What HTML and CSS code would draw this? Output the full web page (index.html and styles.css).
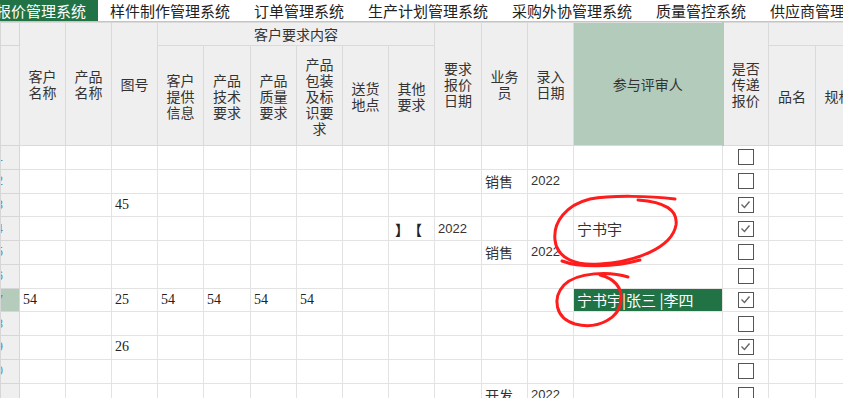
FILE: index.html
```html
<!DOCTYPE html>
<html lang="zh-CN">
<head>
  <meta charset="UTF-8">
  <title>报价管理系统</title>
  <link rel="stylesheet" href="styles.css">
</head>
<body>
  <div class="tabs">
    <div class="tab active">报价管理系统</div>
    <div class="tab">样件制作管理系统</div>
    <div class="tab">订单管理系统</div>
    <div class="tab">生产计划管理系统</div>
    <div class="tab">采购外协管理系统</div>
    <div class="tab">质量管控系统</div>
    <div class="tab">供应商管理系统</div>
  </div>

  <table class="grid">
    <colgroup>
      <col class="w-rn">
      <col class="w46"><col class="w46"><col class="w46">
      <col class="w46"><col class="w47"><col class="w46"><col class="w46"><col class="w46"><col class="w46">
      <col class="w47"><col class="w46"><col class="w46">
      <col class="w-rev">
      <col class="w46"><col class="w47"><col class="w46">
    </colgroup>
    <thead>
      <tr class="h1">
        <th class="rn"></th>
        <th rowspan="2">客户名称</th>
        <th rowspan="2">产品名称</th>
        <th rowspan="2">图号</th>
        <th colspan="6">客户要求内容</th>
        <th rowspan="2">要求报价日期</th>
        <th rowspan="2">业务员</th>
        <th rowspan="2">录入日期</th>
        <th rowspan="2" class="sel">参与评审人</th>
        <th rowspan="2" class="after-sel">是否传递报价</th>
        <th colspan="2"></th>
      </tr>
      <tr class="h2">
        <th class="rn"></th>
        <th>客户提供信息</th>
        <th>产品技术要求</th>
        <th>产品质量要求</th>
        <th>产品包装及标识要求</th>
        <th>送货地点</th>
        <th>其他要求</th>
        <th>品名</th>
        <th>规格</th>
      </tr>
    </thead>
    <tbody>
      <tr>
        <td class="rn"><span>1</span></td>
        <td></td><td></td><td></td><td></td><td></td><td></td><td></td><td></td><td></td>
        <td></td><td></td><td></td><td></td>
        <td><span class="cb"></span></td><td></td><td></td>
      </tr>
      <tr>
        <td class="rn"><span>2</span></td>
        <td></td><td></td><td></td><td></td><td></td><td></td><td></td><td></td><td></td>
        <td></td><td>销售</td><td class="date">2022</td><td></td>
        <td><span class="cb"></span></td><td></td><td></td>
      </tr>
      <tr>
        <td class="rn"><span>3</span></td>
        <td></td><td></td><td class="num">45</td><td></td><td></td><td></td><td></td><td></td><td></td>
        <td></td><td></td><td></td><td></td>
        <td><span class="cb on"><svg width="13" height="13" viewBox="0 0 13 13"><path d="M2.5 6.5 L5.5 9.5 L10.5 3.5" /></svg></span></td><td></td><td></td>
      </tr>
      <tr>
        <td class="rn"><span>4</span></td>
        <td></td><td></td><td></td><td></td><td></td><td></td><td></td><td></td><td class="br">】【</td>
        <td class="date">2022</td><td></td><td></td><td class="rev">宁书宇</td>
        <td><span class="cb on"><svg width="13" height="13" viewBox="0 0 13 13"><path d="M2.5 6.5 L5.5 9.5 L10.5 3.5" /></svg></span></td><td></td><td></td>
      </tr>
      <tr>
        <td class="rn"><span>5</span></td>
        <td></td><td></td><td></td><td></td><td></td><td></td><td></td><td></td><td></td>
        <td></td><td>销售</td><td class="date">2022</td><td></td>
        <td><span class="cb"></span></td><td></td><td></td>
      </tr>
      <tr>
        <td class="rn"><span>6</span></td>
        <td></td><td></td><td></td><td></td><td></td><td></td><td></td><td></td><td></td>
        <td></td><td></td><td></td><td></td>
        <td><span class="cb"></span></td><td></td><td></td>
      </tr>
      <tr>
        <td class="rn cur"><span>7</span></td>
        <td class="num">54</td><td></td><td class="num">25</td><td class="num">54</td><td class="num">54</td><td class="num">54</td><td class="num">54</td><td></td><td></td>
        <td></td><td></td><td></td><td class="rev tag">宁书宇|张三 |李四</td>
        <td><span class="cb on"><svg width="13" height="13" viewBox="0 0 13 13"><path d="M2.5 6.5 L5.5 9.5 L10.5 3.5" /></svg></span></td><td></td><td></td>
      </tr>
      <tr>
        <td class="rn"><span>8</span></td>
        <td></td><td></td><td></td><td></td><td></td><td></td><td></td><td></td><td></td>
        <td></td><td></td><td></td><td></td>
        <td><span class="cb"></span></td><td></td><td></td>
      </tr>
      <tr>
        <td class="rn"><span>9</span></td>
        <td></td><td></td><td class="num">26</td><td></td><td></td><td></td><td></td><td></td><td></td>
        <td></td><td></td><td></td><td></td>
        <td><span class="cb on"><svg width="13" height="13" viewBox="0 0 13 13"><path d="M2.5 6.5 L5.5 9.5 L10.5 3.5" /></svg></span></td><td></td><td></td>
      </tr>
      <tr>
        <td class="rn"><span>10</span></td>
        <td></td><td></td><td></td><td></td><td></td><td></td><td></td><td></td><td></td>
        <td></td><td></td><td></td><td></td>
        <td><span class="cb"></span></td><td></td><td></td>
      </tr>
      <tr>
        <td class="rn"><span>11</span></td>
        <td></td><td></td><td></td><td></td><td></td><td></td><td></td><td></td><td></td>
        <td></td><td>开发</td><td class="date">2022</td><td></td>
        <td><span class="cb"></span></td><td></td><td></td>
      </tr>
    </tbody>
  </table>

  <!-- 手绘红圈标注 -->
  <svg class="marks" width="843" height="398" viewBox="0 0 843 398">
    <path d="M675 199 C650 196 612 195 590 199 C566 205 553 222 555 240 C557 258 575 266 600 264 C635 262 672 248 676 225 C678 210 665 202 638 200" />
    <path d="M562 261 C580 268 615 267 640 260" />
    <path d="M628 277 C610 271 577 272 564 285 C552 298 555 318 575 324 C598 330 620 318 621 300 C622 288 615 279 600 275" />
  </svg>
</body>
</html>
```

FILE: styles.css
```css
* {
  box-sizing: border-box;
}

body {
  margin: 0;
  overflow: hidden;
  background: #fff;
  color: #333;
  font-family: "Noto Sans CJK SC", "Noto Sans", sans-serif;
}

.tabs {
  display: flex;
  height: 22px;
  margin-left: -16px;
  border-bottom: 1px solid #c4c4c4;
}

.tab {
  padding: 0 12px;
  font-size: 15px;
  line-height: 21px;
  white-space: nowrap;
  color: #222;
}

.tab.active {
  background: #217346;
  color: #fff;
}

.grid {
  border-collapse: collapse;
  table-layout: fixed;
  width: 861px;
}

.w-rn { width: 19px; }
.w46 { width: 46px; }
.w47 { width: 47px; }
.w-rev { width: 149px; }

.grid th, .grid td {
  border: 1px solid #e3e3e3;
  padding: 0 3px;
  overflow: hidden;
  white-space: nowrap;
  font-size: 14px;
  line-height: 16px;
}

.grid th {
  background: #efefef;
  border-color: #dadada;
  font-weight: normal;
  white-space: normal;
  color: #333;
}

.grid .h1 { height: 23px; }
.grid .h2 { height: 100px; }
.grid tbody tr { height: 23.75px; }

.grid th.sel {
  background: #b3cbbb;
}

.grid th.after-sel {
  border-left: 2px solid #b3cbbb;
}

.grid .rn {
  background: #efefef;
  border-color: #d6d6d6;
  padding: 0;
}

.rn span {
  display: block;
  width: 20px;
  margin-left: -18px;
  text-align: right;
  color: #4d8fd6;
  font: 12px "Liberation Sans", sans-serif;
}

.grid .rn.cur {
  background: #b5ccbd;
}

.grid .num {
  font-family: "Liberation Serif", serif;
  color: #222;
}

.grid .date {
  font-family: "Liberation Sans", sans-serif;
  font-size: 13px;
}

.grid .rev {
  font-size: 15px;
}

.grid .tag {
  background: #217346;
  color: #fff;
}

.grid .br {
  padding-left: 6px;
  letter-spacing: 6px;
  font-weight: bold;
  color: #222;
}

.cb {
  display: block;
  width: 16px;
  height: 16px;
  margin: 0 auto;
  border: 1.5px solid #555;
  background: #fff;
}

.cb svg {
  display: block;
  fill: none;
  stroke: #666;
  stroke-width: 1.4;
}

.marks {
  position: absolute;
  left: 0;
  top: 0;
  pointer-events: none;
  fill: none;
  stroke: #ff1c1c;
  stroke-width: 3;
  stroke-linecap: round;
  stroke-linejoin: round;
}
```
